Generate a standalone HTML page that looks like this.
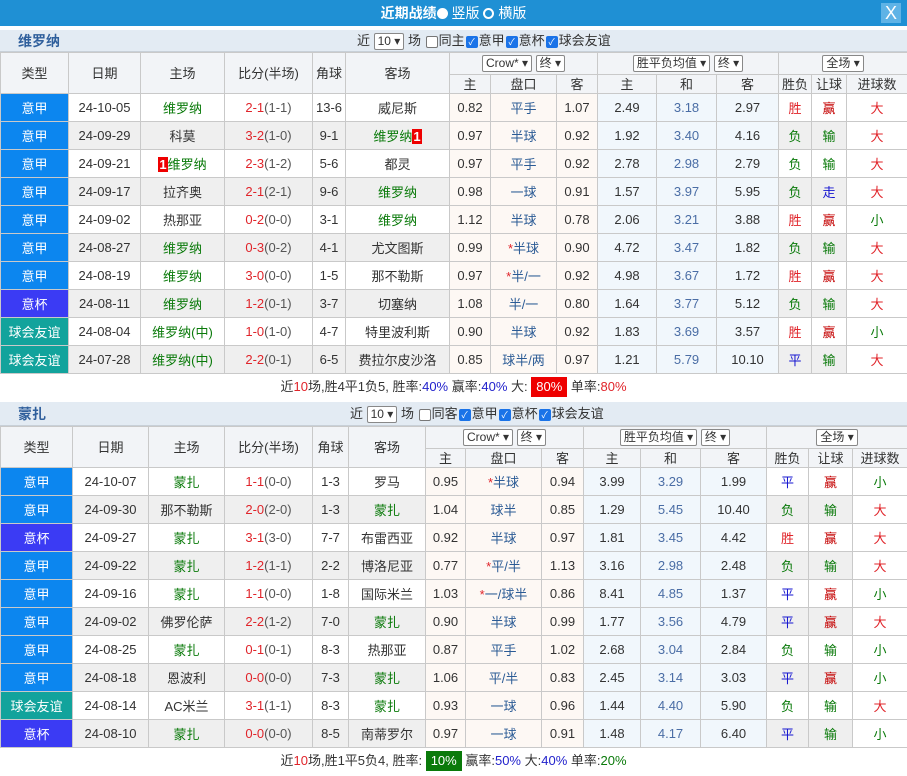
<!DOCTYPE html>
<html><head><meta charset="utf-8">
<style>
*{box-sizing:border-box;margin:0;padding:0}
body{width:907px;height:776px;overflow:hidden;background:#fff;font-family:"Liberation Sans","Noto Sans CJK SC",sans-serif;font-size:13px;color:#333}
.top{height:26px;background:#1f90d4;color:#fff;text-align:center;line-height:26px;font-size:14px;position:relative}
.rd{display:inline-block;width:11px;height:11px;border-radius:50%;border:2px solid #fff;vertical-align:-1px}
.rd.on{background:#fff}
.x{position:absolute;right:6px;top:3px;width:20px;height:20px;background:#5fb3e6;color:#fff;font-size:18px;line-height:20px;text-align:center}
.team{height:22px;background:#e3ebf3;position:relative;border-bottom:1px solid #c8d0d8;overflow:hidden}
.team .n{position:absolute;left:18px;top:2px;color:#2f5f9c;font-size:14px;font-weight:bold;line-height:18px}
.team .c{position:absolute;top:2px;font-size:13px;white-space:nowrap;line-height:18px;height:18px}
.sel{display:inline-block;border:1px solid #888;background:#fff;padding:0 3px;height:17px;line-height:15px;font-size:12px;border-radius:2px;vertical-align:middle}
.cb{display:inline-block;width:12px;height:12px;border:1px solid #777;background:#fff;vertical-align:middle;border-radius:2px;overflow:hidden;font-size:9px;line-height:10px;text-align:center;margin:0 1px}
.cb.on{background:#1a73e8;border-color:#1a73e8;color:#fff}
table{border-collapse:collapse;table-layout:fixed;width:907px}
td,th{border:1px solid #c9c9c9;text-align:center;font-weight:normal;white-space:nowrap;overflow:hidden;padding:0}
th{background:#f2f4f7;color:#333;font-size:13px;line-height:15px}
tr.h1 th{height:22px}tr.h2 th{height:19px}
tbody td{height:28px}
td.t{color:#fff;font-size:13px}
.yj{background:#0c86ef!important}.yb{background:#3b3bf4!important}.yy{background:#12a39c!important}
tr.g td{background:#efefef}
td.o{background:#fdf8f4!important}
td.a{background:#f1f7fc!important}
td.w{background:#fff!important}
.gr{color:#0a7a0a}.r{color:#e0242a}.dr{color:#c40000}.b{color:#1515d0}.pk{color:#2b5b95}.dw{color:#4a6da5}
.s{color:#e0242a}.hs{color:#555}
.rb{background:#e00;color:#fff;font-weight:bold;padding:0 1px}
.sum{height:26px;line-height:26px;text-align:center;font-size:13px;color:#333}
.sum .r1{color:#e0242a}.sum .bl{color:#2222cc}
.box{display:inline-block;color:#fff;padding:0 5px;line-height:20px}
</style></head><body>
<div class="top"><b>近期战绩</b><span class="rd on"></span> 竖版 <span class="rd"></span> 横版<div class="x">X</div></div>
<div style="height:4px;background:#fff"></div>
<div class="team"><span class="n">维罗纳</span><span class="c" style="left:357px">近 <span class="sel">10 ▾</span> 场 <span class="cb"></span>同主<span class="cb on">✓</span>意甲<span class="cb on">✓</span>意杯<span class="cb on">✓</span>球会友谊</span></div>
<table>
<colgroup><col style="width:68px"><col style="width:72px"><col style="width:84px"><col style="width:88px"><col style="width:33px"><col style="width:104px"><col style="width:41px"><col style="width:66px"><col style="width:41px"><col style="width:59px"><col style="width:60px"><col style="width:62px"><col style="width:33px"><col style="width:35px"><col style="width:61px"></colgroup>
<thead>
<tr class="h1"><th rowspan="2">类型</th><th rowspan="2">日期</th><th rowspan="2">主场</th><th rowspan="2">比分(半场)</th><th rowspan="2">角球</th><th rowspan="2">客场</th><th colspan="3"><span class="sel">Crow* ▾</span> <span class="sel">终 ▾</span></th><th colspan="3"><span class="sel">胜平负均值 ▾</span> <span class="sel">终 ▾</span></th><th colspan="3"><span class="sel">全场 ▾</span></th></tr>
<tr class="h2"><th>主</th><th>盘口</th><th>客</th><th>主</th><th>和</th><th>客</th><th>胜负</th><th>让球</th><th>进球数</th></tr>
</thead><tbody>
<tr><td class="t yj">意甲</td><td>24-10-05</td><td class="gr">维罗纳</td><td><span class="s">2-1</span><span class="hs">(1-1)</span></td><td>13-6</td><td>威尼斯</td><td class="o">0.82</td><td class="o pk">平手</td><td class="o">1.07</td><td class="a">2.49</td><td class="a dw">3.18</td><td class="a">2.97</td><td class="r">胜</td><td class="dr">赢</td><td class="r w">大</td></tr>
<tr class="g"><td class="t yj">意甲</td><td>24-09-29</td><td>科莫</td><td><span class="s">3-2</span><span class="hs">(1-0)</span></td><td>9-1</td><td class="gr">维罗纳<span class="rb">1</span></td><td class="o">0.97</td><td class="o pk">半球</td><td class="o">0.92</td><td class="a">1.92</td><td class="a dw">3.40</td><td class="a">4.16</td><td class="gr">负</td><td class="gr">输</td><td class="r w">大</td></tr>
<tr><td class="t yj">意甲</td><td>24-09-21</td><td class="gr"><span class="rb">1</span>维罗纳</td><td><span class="s">2-3</span><span class="hs">(1-2)</span></td><td>5-6</td><td>都灵</td><td class="o">0.97</td><td class="o pk">平手</td><td class="o">0.92</td><td class="a">2.78</td><td class="a dw">2.98</td><td class="a">2.79</td><td class="gr">负</td><td class="gr">输</td><td class="r w">大</td></tr>
<tr class="g"><td class="t yj">意甲</td><td>24-09-17</td><td>拉齐奥</td><td><span class="s">2-1</span><span class="hs">(2-1)</span></td><td>9-6</td><td class="gr">维罗纳</td><td class="o">0.98</td><td class="o pk">一球</td><td class="o">0.91</td><td class="a">1.57</td><td class="a dw">3.97</td><td class="a">5.95</td><td class="gr">负</td><td class="b">走</td><td class="r w">大</td></tr>
<tr><td class="t yj">意甲</td><td>24-09-02</td><td>热那亚</td><td><span class="s">0-2</span><span class="hs">(0-0)</span></td><td>3-1</td><td class="gr">维罗纳</td><td class="o">1.12</td><td class="o pk">半球</td><td class="o">0.78</td><td class="a">2.06</td><td class="a dw">3.21</td><td class="a">3.88</td><td class="r">胜</td><td class="dr">赢</td><td class="gr w">小</td></tr>
<tr class="g"><td class="t yj">意甲</td><td>24-08-27</td><td class="gr">维罗纳</td><td><span class="s">0-3</span><span class="hs">(0-2)</span></td><td>4-1</td><td>尤文图斯</td><td class="o">0.99</td><td class="o pk"><span class="r">*</span>半球</td><td class="o">0.90</td><td class="a">4.72</td><td class="a dw">3.47</td><td class="a">1.82</td><td class="gr">负</td><td class="gr">输</td><td class="r w">大</td></tr>
<tr><td class="t yj">意甲</td><td>24-08-19</td><td class="gr">维罗纳</td><td><span class="s">3-0</span><span class="hs">(0-0)</span></td><td>1-5</td><td>那不勒斯</td><td class="o">0.97</td><td class="o pk"><span class="r">*</span>半/一</td><td class="o">0.92</td><td class="a">4.98</td><td class="a dw">3.67</td><td class="a">1.72</td><td class="r">胜</td><td class="dr">赢</td><td class="r w">大</td></tr>
<tr class="g"><td class="t yb">意杯</td><td>24-08-11</td><td class="gr">维罗纳</td><td><span class="s">1-2</span><span class="hs">(0-1)</span></td><td>3-7</td><td>切塞纳</td><td class="o">1.08</td><td class="o pk">半/一</td><td class="o">0.80</td><td class="a">1.64</td><td class="a dw">3.77</td><td class="a">5.12</td><td class="gr">负</td><td class="gr">输</td><td class="r w">大</td></tr>
<tr><td class="t yy">球会友谊</td><td>24-08-04</td><td class="gr">维罗纳(中)</td><td><span class="s">1-0</span><span class="hs">(1-0)</span></td><td>4-7</td><td>特里波利斯</td><td class="o">0.90</td><td class="o pk">半球</td><td class="o">0.92</td><td class="a">1.83</td><td class="a dw">3.69</td><td class="a">3.57</td><td class="r">胜</td><td class="dr">赢</td><td class="gr w">小</td></tr>
<tr class="g"><td class="t yy">球会友谊</td><td>24-07-28</td><td class="gr">维罗纳(中)</td><td><span class="s">2-2</span><span class="hs">(0-1)</span></td><td>6-5</td><td>费拉尔皮沙洛</td><td class="o">0.85</td><td class="o pk">球半/两</td><td class="o">0.97</td><td class="a">1.21</td><td class="a dw">5.79</td><td class="a">10.10</td><td class="b">平</td><td class="gr">输</td><td class="r w">大</td></tr>
</tbody></table>
<div class="sum">近<span class="r1">10</span>场,胜4平1负5, 胜率:<span class="bl">40%</span> 赢率:<span class="bl">40%</span> 大: <span class="box" style="background:#e00">80%</span> 单率:<span class="r1">80%</span></div>
<div style="height:2px;background:#fff"></div>
<div class="team" style="height:24px"><span class="n" style="top:3px">蒙扎</span><span class="c" style="left:350px;top:3px">近 <span class="sel">10 ▾</span> 场 <span class="cb"></span>同客<span class="cb on">✓</span>意甲<span class="cb on">✓</span>意杯<span class="cb on">✓</span>球会友谊</span></div>
<table>
<colgroup><col style="width:72px"><col style="width:76px"><col style="width:76px"><col style="width:88px"><col style="width:36px"><col style="width:77px"><col style="width:40px"><col style="width:76px"><col style="width:42px"><col style="width:57px"><col style="width:60px"><col style="width:66px"><col style="width:42px"><col style="width:44px"><col style="width:55px"></colgroup>
<thead>
<tr class="h1"><th rowspan="2">类型</th><th rowspan="2">日期</th><th rowspan="2">主场</th><th rowspan="2">比分(半场)</th><th rowspan="2">角球</th><th rowspan="2">客场</th><th colspan="3"><span class="sel">Crow* ▾</span> <span class="sel">终 ▾</span></th><th colspan="3"><span class="sel">胜平负均值 ▾</span> <span class="sel">终 ▾</span></th><th colspan="3"><span class="sel">全场 ▾</span></th></tr>
<tr class="h2"><th>主</th><th>盘口</th><th>客</th><th>主</th><th>和</th><th>客</th><th>胜负</th><th>让球</th><th>进球数</th></tr>
</thead><tbody>
<tr><td class="t yj">意甲</td><td>24-10-07</td><td class="gr">蒙扎</td><td><span class="s">1-1</span><span class="hs">(0-0)</span></td><td>1-3</td><td>罗马</td><td class="o">0.95</td><td class="o pk"><span class="r">*</span>半球</td><td class="o">0.94</td><td class="a">3.99</td><td class="a dw">3.29</td><td class="a">1.99</td><td class="b">平</td><td class="dr">赢</td><td class="gr w">小</td></tr>
<tr class="g"><td class="t yj">意甲</td><td>24-09-30</td><td>那不勒斯</td><td><span class="s">2-0</span><span class="hs">(2-0)</span></td><td>1-3</td><td class="gr">蒙扎</td><td class="o">1.04</td><td class="o pk">球半</td><td class="o">0.85</td><td class="a">1.29</td><td class="a dw">5.45</td><td class="a">10.40</td><td class="gr">负</td><td class="gr">输</td><td class="r w">大</td></tr>
<tr><td class="t yb">意杯</td><td>24-09-27</td><td class="gr">蒙扎</td><td><span class="s">3-1</span><span class="hs">(3-0)</span></td><td>7-7</td><td>布雷西亚</td><td class="o">0.92</td><td class="o pk">半球</td><td class="o">0.97</td><td class="a">1.81</td><td class="a dw">3.45</td><td class="a">4.42</td><td class="r">胜</td><td class="dr">赢</td><td class="r w">大</td></tr>
<tr class="g"><td class="t yj">意甲</td><td>24-09-22</td><td class="gr">蒙扎</td><td><span class="s">1-2</span><span class="hs">(1-1)</span></td><td>2-2</td><td>博洛尼亚</td><td class="o">0.77</td><td class="o pk"><span class="r">*</span>平/半</td><td class="o">1.13</td><td class="a">3.16</td><td class="a dw">2.98</td><td class="a">2.48</td><td class="gr">负</td><td class="gr">输</td><td class="r w">大</td></tr>
<tr><td class="t yj">意甲</td><td>24-09-16</td><td class="gr">蒙扎</td><td><span class="s">1-1</span><span class="hs">(0-0)</span></td><td>1-8</td><td>国际米兰</td><td class="o">1.03</td><td class="o pk"><span class="r">*</span>一/球半</td><td class="o">0.86</td><td class="a">8.41</td><td class="a dw">4.85</td><td class="a">1.37</td><td class="b">平</td><td class="dr">赢</td><td class="gr w">小</td></tr>
<tr class="g"><td class="t yj">意甲</td><td>24-09-02</td><td>佛罗伦萨</td><td><span class="s">2-2</span><span class="hs">(1-2)</span></td><td>7-0</td><td class="gr">蒙扎</td><td class="o">0.90</td><td class="o pk">半球</td><td class="o">0.99</td><td class="a">1.77</td><td class="a dw">3.56</td><td class="a">4.79</td><td class="b">平</td><td class="dr">赢</td><td class="r w">大</td></tr>
<tr><td class="t yj">意甲</td><td>24-08-25</td><td class="gr">蒙扎</td><td><span class="s">0-1</span><span class="hs">(0-1)</span></td><td>8-3</td><td>热那亚</td><td class="o">0.87</td><td class="o pk">平手</td><td class="o">1.02</td><td class="a">2.68</td><td class="a dw">3.04</td><td class="a">2.84</td><td class="gr">负</td><td class="gr">输</td><td class="gr w">小</td></tr>
<tr class="g"><td class="t yj">意甲</td><td>24-08-18</td><td>恩波利</td><td><span class="s">0-0</span><span class="hs">(0-0)</span></td><td>7-3</td><td class="gr">蒙扎</td><td class="o">1.06</td><td class="o pk">平/半</td><td class="o">0.83</td><td class="a">2.45</td><td class="a dw">3.14</td><td class="a">3.03</td><td class="b">平</td><td class="dr">赢</td><td class="gr w">小</td></tr>
<tr><td class="t yy">球会友谊</td><td>24-08-14</td><td>AC米兰</td><td><span class="s">3-1</span><span class="hs">(1-1)</span></td><td>8-3</td><td class="gr">蒙扎</td><td class="o">0.93</td><td class="o pk">一球</td><td class="o">0.96</td><td class="a">1.44</td><td class="a dw">4.40</td><td class="a">5.90</td><td class="gr">负</td><td class="gr">输</td><td class="r w">大</td></tr>
<tr class="g"><td class="t yb">意杯</td><td>24-08-10</td><td class="gr">蒙扎</td><td><span class="s">0-0</span><span class="hs">(0-0)</span></td><td>8-5</td><td>南蒂罗尔</td><td class="o">0.97</td><td class="o pk">一球</td><td class="o">0.91</td><td class="a">1.48</td><td class="a dw">4.17</td><td class="a">6.40</td><td class="b">平</td><td class="gr">输</td><td class="gr w">小</td></tr>
</tbody></table>
<div class="sum">近<span class="r1">10</span>场,胜1平5负4, 胜率: <span class="box" style="background:#0a7a0a">10%</span> 赢率:<span class="bl">50%</span> 大:<span class="bl">40%</span> 单率:<span class="gr">20%</span></div>
</body></html>
